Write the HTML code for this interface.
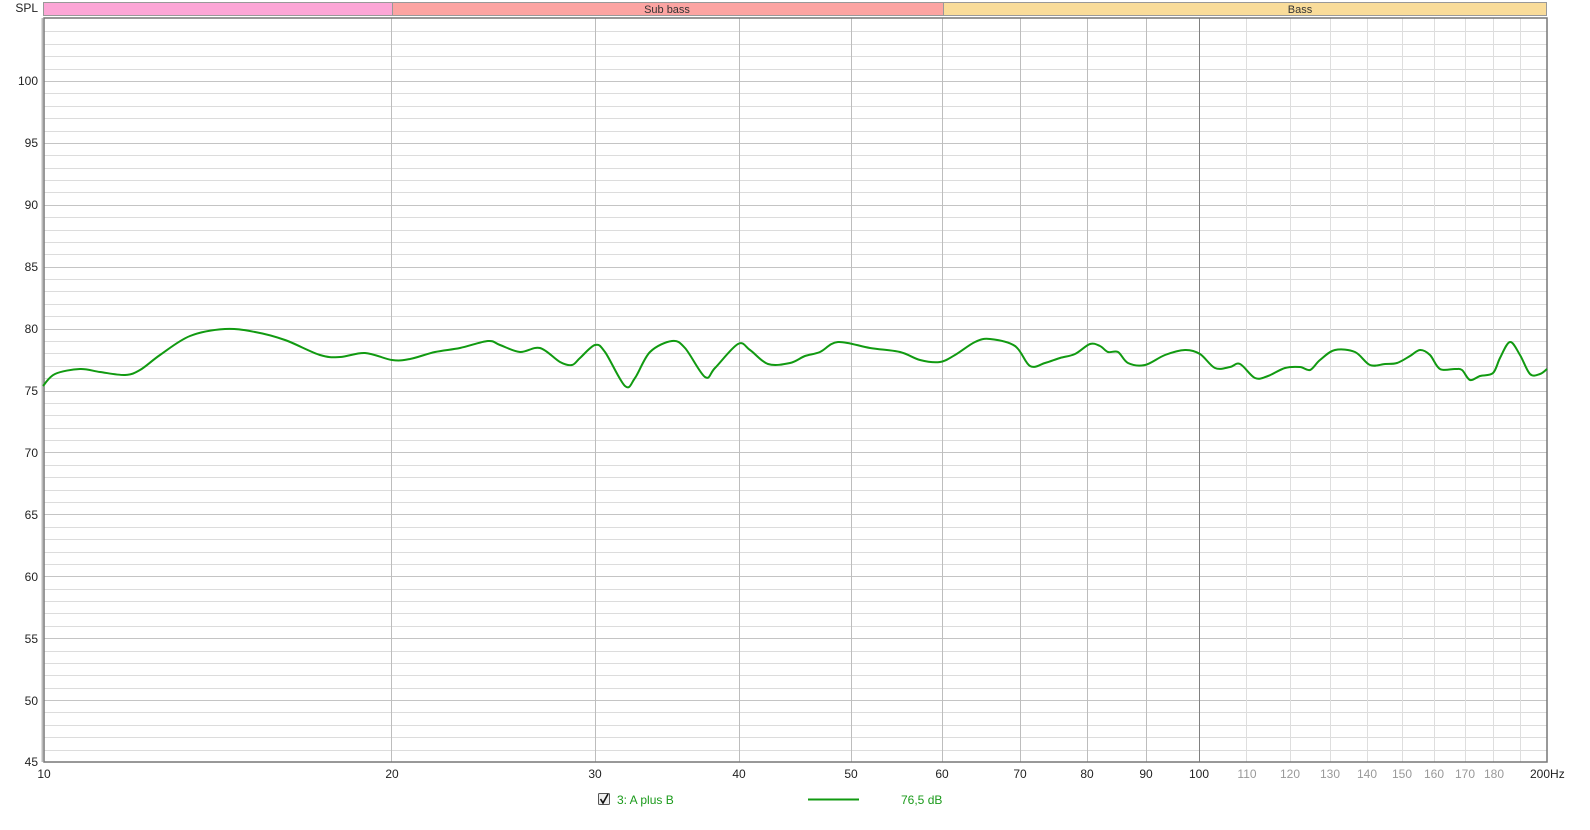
<!DOCTYPE html>
<html><head><meta charset="utf-8"><style>
body{margin:0;width:1590px;height:825px;background:#fff;overflow:hidden;font-family:"Liberation Sans",sans-serif;}
svg text{font-family:"Liberation Sans",sans-serif;font-size:12px;}
</style></head><body>
<svg id="s" width="1590" height="825" xmlns="http://www.w3.org/2000/svg">
<rect x="43.5" y="2.5" width="349" height="13" fill="#fca6d6" stroke="#999"/>
<rect x="392.5" y="2.5" width="551" height="13" fill="#fca4a2" stroke="#999"/>
<rect x="943.5" y="2.5" width="603" height="13" fill="#f9dc9a" stroke="#999"/>
<text x="667" y="13" text-anchor="middle" fill="#333" style="font-size:11px">Sub bass</text>
<text x="1300" y="13" text-anchor="middle" fill="#333" style="font-size:11px">Bass</text>
<text x="38" y="12" text-anchor="end" fill="#222">SPL</text>
<g id="grid"></g>
<rect x="44" y="18" width="1503" height="744" fill="none" stroke="#777" stroke-width="1.5"/>
<line x1="42.5" y1="18" x2="42.5" y2="762" stroke="#bbb" stroke-width="2"/>
<path id="curve" fill="none" stroke="#119a11" stroke-width="2" stroke-linejoin="round" d=""/>
<g fill="#222">
<text x="38" y="85" text-anchor="end">100</text>
<text x="38" y="147" text-anchor="end">95</text>
<text x="38" y="209" text-anchor="end">90</text>
<text x="38" y="271" text-anchor="end">85</text>
<text x="38" y="333" text-anchor="end">80</text>
<text x="38" y="395" text-anchor="end">75</text>
<text x="38" y="457" text-anchor="end">70</text>
<text x="38" y="519" text-anchor="end">65</text>
<text x="38" y="581" text-anchor="end">60</text>
<text x="38" y="643" text-anchor="end">55</text>
<text x="38" y="705" text-anchor="end">50</text>
<text x="38" y="766" text-anchor="end">45</text>
<text x="44" y="778" text-anchor="middle">10</text>
<text x="392" y="778" text-anchor="middle">20</text>
<text x="595" y="778" text-anchor="middle">30</text>
<text x="739" y="778" text-anchor="middle">40</text>
<text x="851" y="778" text-anchor="middle">50</text>
<text x="942" y="778" text-anchor="middle">60</text>
<text x="1020" y="778" text-anchor="middle">70</text>
<text x="1087" y="778" text-anchor="middle">80</text>
<text x="1146" y="778" text-anchor="middle">90</text>
<text x="1199" y="778" text-anchor="middle">100</text>
<text x="1530" y="778">200Hz</text>
</g>
<g fill="#999">
<text x="1247" y="778" text-anchor="middle">110</text>
<text x="1290" y="778" text-anchor="middle">120</text>
<text x="1330" y="778" text-anchor="middle">130</text>
<text x="1367" y="778" text-anchor="middle">140</text>
<text x="1402" y="778" text-anchor="middle">150</text>
<text x="1434" y="778" text-anchor="middle">160</text>
<text x="1465" y="778" text-anchor="middle">170</text>
<text x="1494" y="778" text-anchor="middle">180</text>
</g>
<rect x="598.5" y="793.5" width="11" height="11" fill="#eee" stroke="#555" rx="1"/>
<path d="M600.5 799 L603 803 L608 794" fill="none" stroke="#111" stroke-width="1.6"/>
<text x="617" y="804" fill="#1a9a1a">3: A plus B</text>
<line x1="808" y1="799.5" x2="859" y2="799.5" stroke="#119a11" stroke-width="2"/>
<text x="901" y="804" fill="#1a9a1a">76,5 dB</text>
</svg>
<script>
var g=document.getElementById('grid'),h='';
for(var d=46;d<=104;d++){var y=Math.round(762-(d-45)*12.382)+0.5;h+='<line x1="44" x2="1547" y1="'+y+'" y2="'+y+'" stroke="'+(d%5==0?'#c4c4c4':'#dcdcdc')+'"/>';}
for(var f=20;f<200;f+=10){var x=Math.round(43.5+1155*Math.log10(f/10))+0.5;var c=f==100?'#808080':(f<100?'#bdbdbd':'#dedede');h+='<line y1="18" y2="762" x1="'+x+'" x2="'+x+'" stroke="'+c+'"/>';}
g.innerHTML=h;
var P=[[43,386],[55,374],[80,369],[100,372],[125,375],[140,370],[160,355],[190,336],[225,329],[255,332],[285,340],[320,355],[340,357],[365,353],[392,360],[410,359],[435,352],[460,348],[488,341],[500,345],[520,352],[540,348],[560,362],[572,365],[580,358],[595,345],[605,352],[625,386],[635,378],[650,352],[672,341],[685,348],[705,377],[715,368],[738,344],[750,350],[768,364],[790,363],[805,356],[820,352],[838,342],[870,348],[900,352],[920,360],[940,362],[955,355],[975,342],[990,339],[1015,346],[1030,366],[1045,363],[1060,358],[1075,354],[1090,344],[1100,346],[1108,352],[1118,352],[1128,363],[1145,365],[1165,355],[1185,350],[1200,354],[1215,368],[1230,367],[1240,364],[1255,378],[1268,376],[1285,368],[1300,367],[1310,370],[1320,360],[1335,350],[1355,352],[1370,365],[1385,364],[1397,363],[1410,356],[1420,350],[1430,355],[1440,369],[1455,369],[1462,370],[1470,380],[1480,376],[1493,373],[1500,358],[1510,342],[1520,355],[1530,374],[1540,374],[1547,369]];
var d='M'+P[0][0]+' '+P[0][1];
for(var i=0;i<P.length-1;i++){var p0=P[Math.max(i-1,0)],p1=P[i],p2=P[i+1],p3=P[Math.min(i+2,P.length-1)];
d+=' C'+(p1[0]+(p2[0]-p0[0])/6).toFixed(1)+' '+(p1[1]+(p2[1]-p0[1])/6).toFixed(1)+' '+(p2[0]-(p3[0]-p1[0])/6).toFixed(1)+' '+(p2[1]-(p3[1]-p1[1])/6).toFixed(1)+' '+p2[0]+' '+p2[1];}
document.getElementById('curve').setAttribute('d',d);
</script>
</body></html>
